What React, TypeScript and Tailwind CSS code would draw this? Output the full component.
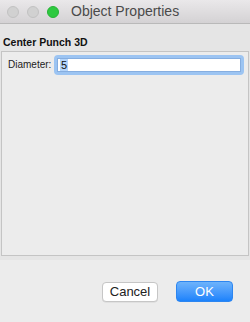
import React from "react";

export default function App() {
  const font = { fontFamily: '"Liberation Sans", Arial, Helvetica, sans-serif' };
  return (
    <div className="w-[250px] h-[322px] flex flex-col bg-[#ececec] overflow-hidden" style={font}>
      {/* Title bar */}
      <div className="h-[24px] shrink-0 flex items-center border-b border-[#b9b9b9] bg-gradient-to-b from-[#eae8ea] to-[#d4d2d4]">
        <div className="flex items-center gap-[8px] pl-[7px]">
          <div className="w-[12px] h-[12px] rounded-full bg-[#d1d1d1] border border-[#c2c2c2]" />
          <div className="w-[12px] h-[12px] rounded-full bg-[#d1d1d1] border border-[#c2c2c2]" />
          <div className="w-[12px] h-[12px] rounded-full bg-[#2ec940] border border-[#27b335]" />
        </div>
        <div className="ml-[12px] text-[14px] leading-[16px] text-[#4a4a4a] pb-[1px]">Object Properties</div>
      </div>

      {/* Header strip */}
      <div className="h-[27px] shrink-0 bg-[#e5e5e5] pl-[3px] pt-[12px]">
        <div className="text-[10.5px] leading-[12px] font-bold text-[#111]">Center Punch 3D</div>
      </div>

      {/* Panel */}
      <div className="bg-[#e5e5e5] px-[1px]">
        <div className="h-[205px] border border-[#c4c4c4] bg-[#ececec] pt-[3px] pl-[6px] pr-[4px]">
          <div className="flex items-center">
            <div className="text-[10px] leading-[12px] text-[#222] w-[46px] shrink-0">Diameter:</div>
            <div className="flex-1 h-[20px] rounded-[4px] bg-[#9cc4f2] p-[3px]">
              <div className="h-full bg-white border border-[#86aee0] flex items-center pl-[2px]">
                <span className="bg-[#b4d5fb] text-[11px] leading-[12px] text-[#111] px-[1px]">5</span>
              </div>
            </div>
          </div>
        </div>
      </div>
      <div className="h-[4px] shrink-0 bg-[#e5e5e5]" />

      {/* Buttons */}
      <div className="flex-1 flex justify-end items-start pt-[22px] pr-[17px] gap-[18px]">
        <button className="w-[56px] h-[20px] rounded-[4px] bg-white border border-[#c6c6c6] text-[13px] leading-[16px] text-[#222] shadow-[0_0.5px_0_rgba(0,0,0,0.1)]">
          Cancel
        </button>
        <button className="w-[57px] h-[21px] -mt-[1px] rounded-[4px] bg-gradient-to-b from-[#6db3fb] to-[#1a82fb] border border-[#2d86f0] text-[13px] leading-[16px] text-white">
          OK
        </button>
      </div>
    </div>
  );
}
